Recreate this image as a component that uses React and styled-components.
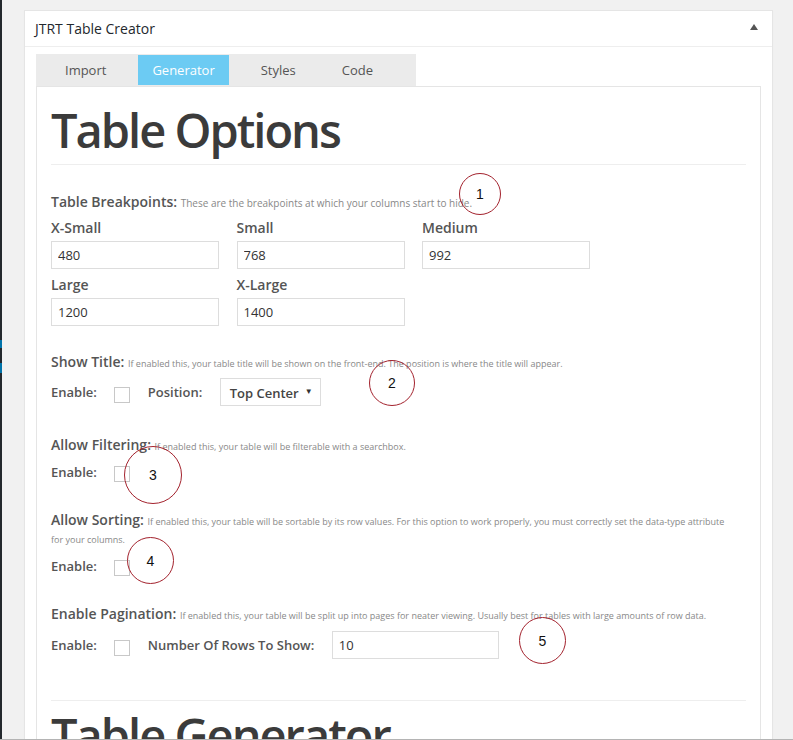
import React from "react";
import styled, { createGlobalStyle } from "styled-components";

const GlobalStyle = createGlobalStyle`
  body {
    margin: 0;
    background: #f1f1f1;
    font-family: "Open Sans", "Liberation Sans", sans-serif;
  }
`;

const Page = styled.div`
  position: relative;
  display: flex;
  height: 740px;
  overflow: hidden;
  box-sizing: border-box;
  border-bottom: 1px solid #b4b4b4;
`;

const AdminEdge = styled.div`
  width: 2px;
  flex-shrink: 0;
  background: #23282d;
  display: flex;
  flex-direction: column;
`;

const EdgeMark = styled.div`
  height: ${props => props.$h}px;
  margin-top: ${props => props.$top}px;
  background: #0073aa;
`;

const Main = styled.div`
  flex: 1;
  padding: 10px 0 0 22px;
`;

const Panel = styled.div`
  width: 749px;
  box-sizing: border-box;
  border: 1px solid #e5e5e5;
  background: #fff;
  box-shadow: 0 1px 1px rgba(0, 0, 0, 0.04);
  min-height: 760px;
`;

const PanelHeader = styled.div`
  height: 35px;
  border-bottom: 1px solid #eee;
  display: flex;
  align-items: center;
  justify-content: space-between;
  padding: 0 14px 0 10px;
  font-size: 14px;
  color: #23282d;
`;

const Toggle = styled.span`
  width: 0;
  height: 0;
  border-left: 4px solid transparent;
  border-right: 4px solid transparent;
  border-bottom: 6px solid #555;
  margin-top: -3px;
`;

const PanelBody = styled.div`
  padding: 7px 11px 0 11px;
`;

const TabBar = styled.div`
  display: inline-flex;
  align-items: center;
  height: 32px;
  background: #ebebeb;
  padding: 0 20px 0 6px;
  vertical-align: top;
`;

const Tab = styled.div`
  height: 30px;
  line-height: 30px;
  margin: 0 9px;
  padding: 0 14px;
  font-size: 13px;
  color: ${props => (props.$active ? "#fff" : "#555")};
  background: ${props => (props.$active ? "#6ccbf3" : "transparent")};
`;

const ContentBox = styled.div`
  border: 1px solid #e5e5e5;
  padding: 0 14px;
  min-height: 700px;
`;

const Heading = styled.h1`
  margin: ${props => props.$top}px 0 0;
  font-size: 47px;
  line-height: 55px;
  font-weight: 600;
  color: #3b3b3b;
  letter-spacing: -2px;
`;

const Rule = styled.hr`
  border: 0;
  border-top: 1px solid #eee;
  margin: ${props => props.$top}px 0 0;
`;

const Section = styled.div`
  margin-top: ${props => props.$top}px;
`;

const SectionTitle = styled.p`
  margin: 0;
  font-size: 14px;
  line-height: 18px;
  font-weight: 600;
  color: #555;
`;

const Desc = styled.span`
  font-size: ${props => props.$size || 9}px;
  line-height: 12px;
  font-weight: 400;
  color: #888;
`;

const BreakpointGrid = styled.div`
  display: grid;
  grid-template-columns: repeat(3, 168px);
  column-gap: 17.5px;
  row-gap: 6px;
  margin-top: 7px;
`;

const Field = styled.label`
  display: flex;
  flex-direction: column;
  gap: 4px;
`;

const FieldLabel = styled.span`
  font-size: 14px;
  line-height: 19px;
  font-weight: 600;
  color: #555;
`;

const TextInput = styled.input`
  box-sizing: border-box;
  width: ${props => props.$w || 168}px;
  height: 28px;
  border: 1px solid #ddd;
  padding: 0 6px;
  font-family: "Open Sans", "Liberation Sans", sans-serif;
  font-size: 13px;
  color: #333;
  outline: none;
`;

const OptionRow = styled.div`
  display: flex;
  align-items: center;
  gap: 17.5px;
  margin-top: ${props => props.$top || 7}px;
`;

const RowLabel = styled.span`
  font-size: 13px;
  line-height: 20px;
  font-weight: 600;
  color: #555;
`;

const CheckBox = styled.span`
  box-sizing: border-box;
  width: 16px;
  height: 16px;
  margin-top: 5px;
  border: 1px solid #c8c8c8;
  background: #fff;
`;

const Select = styled.div`
  box-sizing: border-box;
  width: 101px;
  height: 28px;
  border: 1px solid #ddd;
  display: flex;
  align-items: center;
  justify-content: space-between;
  padding: 2px 7px 0 9px;
  font-size: 13px;
  font-weight: 600;
  color: #444;
`;

const Caret = styled.span`
  font-size: 8px;
  color: #333;
  margin-top: -6px;
`;

const Annotation = styled.div`
  position: absolute;
  left: ${props => props.$x}px;
  top: ${props => props.$y}px;
  width: ${props => props.$d}px;
  height: ${props => props.$d}px;
  box-sizing: border-box;
  border: 1px solid #a3222d;
  border-radius: 50%;
  display: flex;
  align-items: center;
  justify-content: center;
  font-family: "Liberation Sans", sans-serif;
  font-size: 14px;
  color: #111;
`;

const annotations = [
  { n: 1, x: 459, y: 173, d: 42 },
  { n: 2, x: 369, y: 360, d: 46 },
  { n: 3, x: 124, y: 446, d: 58 },
  { n: 4, x: 127, y: 537, d: 47 },
  { n: 5, x: 519, y: 617, d: 47 },
];

const breakpoints = [
  { label: "X-Small", value: "480" },
  { label: "Small", value: "768" },
  { label: "Medium", value: "992" },
  { label: "Large", value: "1200" },
  { label: "X-Large", value: "1400" },
];

export default function App() {
  return (
    <>
      <GlobalStyle />
      <Page>
        <AdminEdge>
          <EdgeMark $top={340} $h={8} />
          <EdgeMark $top={15} $h={10} />
        </AdminEdge>
        <Main>
          <Panel>
            <PanelHeader>
              <span>JTRT Table Creator</span>
              <Toggle />
            </PanelHeader>
            <PanelBody>
              <TabBar>
                <Tab>Import</Tab>
                <Tab $active>Generator</Tab>
                <Tab>Styles</Tab>
                <Tab>Code</Tab>
              </TabBar>
              <ContentBox>
                <Heading $top={16}>Table Options</Heading>
                <Rule $top={6} />

                <Section $top={28}>
                  <SectionTitle>
                    Table Breakpoints: <Desc $size={10}>These are the breakpoints at which your columns start to hide.</Desc>
                  </SectionTitle>
                  <BreakpointGrid>
                    {breakpoints.map(bp => (
                      <Field key={bp.label}>
                        <FieldLabel>{bp.label}</FieldLabel>
                        <TextInput readOnly value={bp.value} />
                      </Field>
                    ))}
                  </BreakpointGrid>
                </Section>

                <Section $top={27}>
                  <SectionTitle>
                    Show Title: <Desc>If enabled this, your table title will be shown on the front-end. The position is where the title will appear.</Desc>
                  </SectionTitle>
                  <OptionRow>
                    <RowLabel>Enable:</RowLabel>
                    <CheckBox />
                    <RowLabel>Position:</RowLabel>
                    <Select>
                      Top Center <Caret>▼</Caret>
                    </Select>
                  </OptionRow>
                </Section>

                <Section $top={30}>
                  <SectionTitle>
                    Allow Filtering: <Desc>If enabled this, your table will be filterable with a searchbox.</Desc>
                  </SectionTitle>
                  <OptionRow>
                    <RowLabel>Enable:</RowLabel>
                    <CheckBox />
                  </OptionRow>
                </Section>

                <Section $top={29}>
                  <SectionTitle>
                    Allow Sorting: <Desc>If enabled this, your table will be sortable by its row values. For this option to work properly, you must correctly set the data-type attribute<br />for your columns.</Desc>
                  </SectionTitle>
                  <OptionRow $top={8}>
                    <RowLabel>Enable:</RowLabel>
                    <CheckBox />
                  </OptionRow>
                </Section>

                <Section $top={29}>
                  <SectionTitle>
                    Enable Pagination: <Desc>If enabled this, your table will be split up into pages for neater viewing. Usually best for tables with large amounts of row data.</Desc>
                  </SectionTitle>
                  <OptionRow $top={8}>
                    <RowLabel>Enable:</RowLabel>
                    <CheckBox />
                    <RowLabel>Number Of Rows To Show:</RowLabel>
                    <TextInput readOnly value="10" $w={167} />
                  </OptionRow>
                </Section>

                <Rule $top={41} />
                <Heading $top={7}>Table Generator</Heading>
              </ContentBox>
            </PanelBody>
          </Panel>
        </Main>
        {annotations.map(a => (
          <Annotation key={a.n} $x={a.x} $y={a.y} $d={a.d}>
            {a.n}
          </Annotation>
        ))}
      </Page>
    </>
  );
}
